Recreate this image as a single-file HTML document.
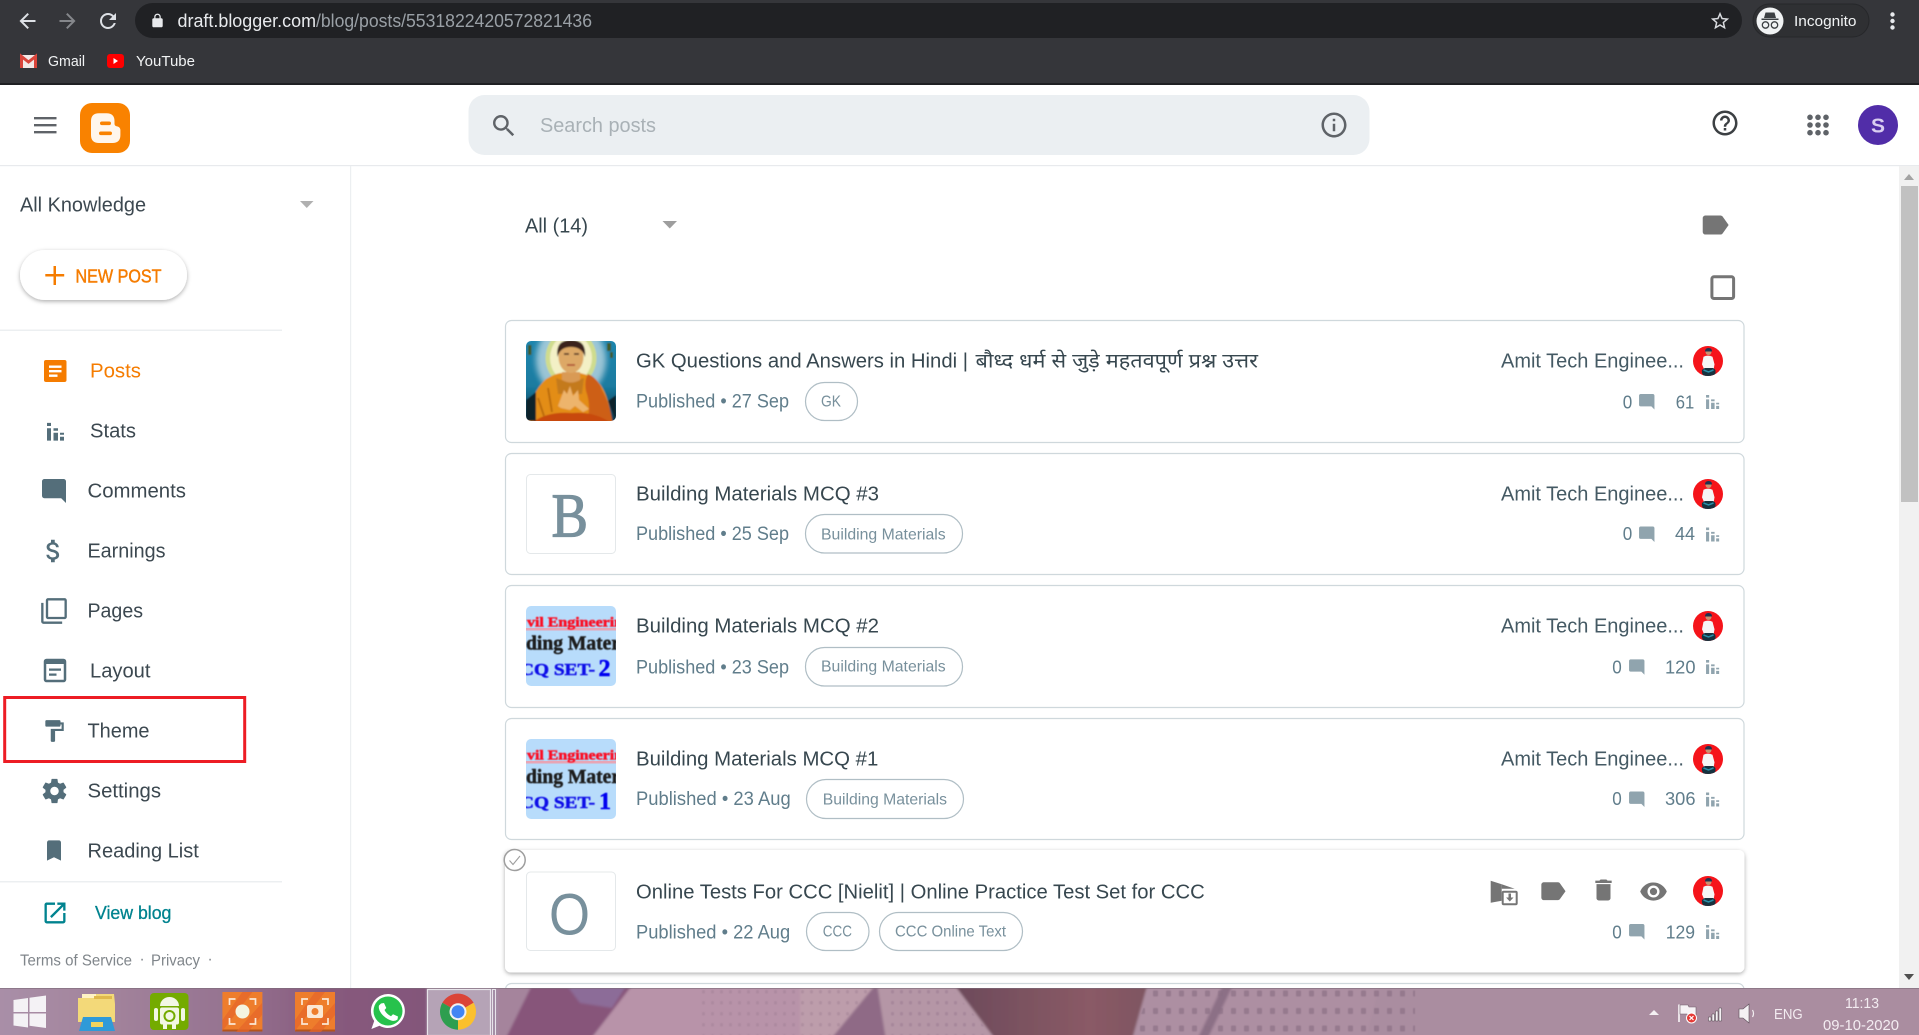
<!DOCTYPE html>
<html lang="en"><head><meta charset="utf-8"><title>Blogger - Posts</title>
<style>
html,body{margin:0;padding:0;width:1919px;height:1035px;overflow:hidden;background:#fff}
svg{display:block}
text{font-family:"Liberation Sans","Noto Sans Devanagari","Lohit Devanagari","FreeSans","Noto Sans CJK SC",sans-serif}
.t{font-size:20px;fill:#37474f}
.s{font-size:19.5px;fill:#607d8b}
.p{font-size:16px;fill:#78909c}
.n{font-size:20px;fill:#3c4850}
.a{font-size:20px;fill:#455a64}
.c{font-size:18.5px;fill:#607d8b}
.f{font-size:15.5px;fill:#80868b}
.w{font-size:15px;fill:#f1f3f4}
text.sf{font-family:"Liberation Serif",serif;font-weight:bold;stroke-width:.5px}
</style></head><body>
<svg width="1919" height="1035" viewBox="0 0 1919 1035" xmlns="http://www.w3.org/2000/svg">
<defs>
<filter id="sh" x="-5%" y="-20%" width="110%" height="140%"><feDropShadow dx="0" dy="1.5" stdDeviation="2" flood-color="#000" flood-opacity=".32"/></filter>
<filter id="bl1" x="-2%" y="-10%" width="104%" height="120%"><feGaussianBlur stdDeviation="1.200"/></filter>
<filter id="bl2" x="-5%" y="-5%" width="110%" height="110%"><feGaussianBlur stdDeviation=".55"/></filter>
<filter id="bl3" x="-5%" y="-5%" width="110%" height="110%"><feGaussianBlur stdDeviation=".8"/></filter>
<filter id="bl4" x="-30%" y="-30%" width="160%" height="160%"><feGaussianBlur stdDeviation="3"/></filter>
<pattern id="lace" patternUnits="userSpaceOnUse" x="1150" y="988" width="13" height="17.500"><rect x="3" y="2.500" width="5" height="6" rx="1" fill="#8a6f84" opacity=".65"/></pattern>
<pattern id="lace2" patternUnits="userSpaceOnUse" x="700" y="988" width="9" height="11"><rect x="2" y="2" width="3" height="3.500" rx="1" fill="#97788f" opacity=".5"/></pattern>
<linearGradient id="dk" x1="0" x2="1" y1="0" y2="0"><stop offset="0" stop-color="#6c4a5a"/><stop offset=".7" stop-color="#8a5a66"/><stop offset="1" stop-color="#7e5561"/></linearGradient>
<linearGradient id="lf" x1="0" x2="1" y1="0" y2="0"><stop offset="0" stop-color="#a98fa8"/><stop offset=".25" stop-color="#a3849c"/><stop offset=".55" stop-color="#957290"/><stop offset=".78" stop-color="#875a7d"/><stop offset="1" stop-color="#83567a"/></linearGradient>
<linearGradient id="bud" x1="0" x2="0" y1="0" y2="1"><stop offset="0" stop-color="#1f86ae"/><stop offset=".55" stop-color="#1a7ba0"/><stop offset="1" stop-color="#0d3244"/></linearGradient>
<clipPath id="c1"><rect x="526" y="341" width="90" height="80" rx="5"/></clipPath>
<clipPath id="c3"><rect x="526" y="606" width="90" height="80" rx="5"/></clipPath>
<clipPath id="c4"><rect x="526" y="739" width="90" height="80" rx="5"/></clipPath>
<clipPath id="av"><circle cx="15" cy="15" r="15"/></clipPath>
<symbol id="search" viewBox="0 0 24 24"><path d="M15.5 14h-.79l-.28-.27A6.471 6.471 0 0 0 16 9.5 6.5 6.5 0 1 0 9.5 16c1.61 0 3.09-.59 4.23-1.57l.27.28v.79l5 4.99L20.49 19l-4.99-5zm-6 0C7.01 14 5 11.99 5 9.5S7.01 5 9.5 5 14 7.01 14 9.5 11.99 14 9.5 14z"/></symbol>
<symbol id="info" viewBox="0 0 24 24"><path d="M11 7h2v2h-2zm0 4h2v6h-2zm1-9C6.48 2 2 6.48 2 12s4.48 10 10 10 10-4.48 10-10S17.52 2 12 2zm0 18c-4.41 0-8-3.59-8-8s3.59-8 8-8 8 3.59 8 8-3.59 8-8 8z"/></symbol>
<symbol id="help" viewBox="0 0 24 24"><path d="M11 18h2v-2h-2v2zm1-16C6.48 2 2 6.48 2 12s4.48 10 10 10 10-4.48 10-10S17.52 2 12 2zm0 18c-4.41 0-8-3.59-8-8s3.59-8 8-8 8 3.59 8 8-3.59 8-8 8zm0-14c-2.21 0-4 1.79-4 4h2c0-1.1.9-2 2-2s2 .9 2 2c0 2-3 1.75-3 5h2c0-2.25 3-2.5 3-5 0-2.21-1.79-4-4-4z"/></symbol>
<symbol id="label" viewBox="0 0 24 24"><path d="M17.63 5.84C17.27 5.33 16.67 5 16 5L5 5.01C3.9 5.01 3 5.9 3 7v10c0 1.1.9 1.99 2 1.99L16 19c.67 0 1.27-.33 1.63-.84L22 12l-4.37-6.16z"/></symbol>
<symbol id="del" viewBox="0 0 24 24"><path d="M6 19c0 1.1.9 2 2 2h8c1.1 0 2-.9 2-2V7H6v12zM19 4h-3.5l-1-1h-5l-1 1H5v2h14V4z"/></symbol>
<symbol id="eye" viewBox="0 0 24 24"><path d="M12 4.5C7 4.5 2.73 7.61 1 12c1.73 4.39 6 7.5 11 7.5s9.27-3.11 11-7.5c-1.73-4.39-6-7.5-11-7.5zM12 17c-2.76 0-5-2.24-5-5s2.24-5 5-5 5 2.24 5 5-2.24 5-5 5zm0-8c-1.66 0-3 1.34-3 3s1.34 3 3 3 3-1.34 3-3-1.34-3-3-3z"/></symbol>
<symbol id="cm" viewBox="0 0 24 24"><path d="M21.99 4c0-1.1-.89-2-1.99-2H4c-1.1 0-2 .9-2 2v12c0 1.1.9 2 2 2h14l4 4-.01-18z"/></symbol>
<symbol id="bars" viewBox="0 0 17 18"><path d="M0 0h4v3.3H0zM0 5.6h4V18H0zM6.5 5.6H11v2.5H6.5zM6.5 10H11v8H6.5zM13 10h4v2h-4zM13 14h4v4h-4z"/></symbol>
<symbol id="avatar" viewBox="0 0 30 30"><g clip-path="url(#av)"><rect width="30" height="30" fill="#f5141a"/><path d="M12.500 5.500q0 3.500 3 3.500t3-3.500z" fill="#c9916f"/><path d="M12 5.500q0-3.500 3.500-3.500t3.500 3.500z" fill="#1e3350"/><path d="M10.500 10.800q4.500-2.300 9 0l2 7.500-1 6h-9l-2.500-6z" fill="#f5f5f5"/><path d="M9 27q-1-4 3-5l8 0q3 1 2.500 5l-1 3h-11z" fill="#16323f"/><path d="M10.500 24l5 2 5-2" stroke="#2a8fa8" stroke-width="1.500" fill="none"/></g></symbol>
</defs>

<!-- Browser chrome -->
<rect width="1919" height="85" fill="#35363a"/>
<rect y="83" width="1919" height="2" fill="#1f2023"/>
<rect x="135" y="3" width="1607" height="35" rx="17.5" fill="#202124"/>
<svg x="15.5" y="9" width="24" height="24" viewBox="0 0 24 24"><path fill="#dee1e6" d="M20 11H7.83l5.59-5.59L12 4l-8 8 8 8 1.41-1.41L7.83 13H20v-2z"/></svg>
<svg x="55.5" y="9" width="24" height="24" viewBox="0 0 24 24"><path fill="#85878b" d="M12 4l-1.41 1.41L16.17 11H4v2h12.17l-5.58 5.59L12 20l8-8z"/></svg>
<svg x="96" y="9" width="24" height="24" viewBox="0 0 24 24"><path fill="#dee1e6" d="M17.65 6.35C16.2 4.9 14.21 4 12 4c-4.42 0-7.99 3.58-7.99 8s3.57 8 7.99 8c3.73 0 6.84-2.55 7.73-6h-2.08c-.82 2.33-3.04 4-5.65 4-3.31 0-6-2.69-6-6s2.69-6 6-6c1.66 0 3.14.69 4.22 1.78L13 11h7V4l-2.35 2.35z"/></svg>
<svg x="149.7" y="13" width="15.6" height="15.6" viewBox="0 0 24 24"><path fill="#e8eaed" d="M18 8h-1V6c0-2.76-2.24-5-5-5S7 3.24 7 6v2H6c-1.1 0-2 .9-2 2v10c0 1.1.9 2 2 2h12c1.1 0 2-.9 2-2V10c0-1.1-.9-2-2-2zm-2.900 0H8.900V6c0-1.710 1.390-3.100 3.100-3.100 1.710 0 3.100 1.390 3.100 3.100v2z"/></svg>
<text x="177.5" y="27" font-size="18" fill="#e8eaed" textLength="138.5" lengthAdjust="spacingAndGlyphs">draft.blogger.com</text>
<text x="316" y="27" font-size="18" fill="#9aa0a6" textLength="276" lengthAdjust="spacingAndGlyphs">/blog/posts/5531822420572821436</text>
<svg x="1709" y="10" width="22" height="22" viewBox="0 0 24 24"><path fill="#dadce0" d="M22 9.24l-7.19-.62L12 2 9.19 8.63 2 9.24l5.46 4.73L5.82 21 12 17.27 18.18 21l-1.63-7.03L22 9.24zM12 15.4l-3.76 2.27 1-4.28-3.32-2.88 4.38-.38L12 6.1l1.71 4.04 4.38.38-3.32 2.88 1 4.28L12 15.4z"/></svg>
<rect x="1753" y="4" width="116" height="33" rx="16.5" fill="#2f3033" stroke="#26272a"/>
<circle cx="1770" cy="21" r="13.5" fill="#f1f3f4"/>
<path d="M1764 18h12l-1.5-5.5h-9zM1761.5 18.5h17v1.5h-17z" fill="#3c4043"/>
<circle cx="1765.5" cy="25" r="3.2" fill="none" stroke="#3c4043" stroke-width="1.3"/><circle cx="1774.5" cy="25" r="3.2" fill="none" stroke="#3c4043" stroke-width="1.3"/>
<text x="1794" y="26" class="w" textLength="62.5" lengthAdjust="spacingAndGlyphs">Incognito</text>
<circle cx="1892.5" cy="14.5" r="2.2" fill="#e8eaed"/><circle cx="1892.5" cy="21" r="2.2" fill="#e8eaed"/><circle cx="1892.5" cy="27.5" r="2.2" fill="#e8eaed"/>
<!-- bookmarks -->
<rect x="20" y="55" width="17" height="13" rx="1" fill="#f3e9e7"/>
<path d="M21.500 68V56.500L28.500 62l7-5.500V68" fill="none" stroke="#d9453b" stroke-width="3"/>
<text x="48" y="66" class="w" textLength="37" lengthAdjust="spacingAndGlyphs">Gmail</text>
<rect x="107" y="54" width="17" height="14" rx="3" fill="#f00"/><path d="M113.500 58v6l4.500-3z" fill="#fff"/>
<text x="136" y="66" class="w" textLength="59" lengthAdjust="spacingAndGlyphs">YouTube</text>

<!-- App header -->
<rect y="85" width="1919" height="80" fill="#fff"/>
<rect y="165" width="1919" height="1.200" fill="#e8eaed"/>
<path d="M34 117h22.500v2.400H34zM34 124h22.500v2.400H34zM34 131h22.500v2.400H34z" fill="#5f6368"/>
<rect x="80" y="103" width="50" height="50" rx="12" fill="#f98200"/>
<path d="M99 113.300h7.500q8 0 8 8v2.500q0 2 2 2.500q3.900.5 3.900 4v4.700q0 8-8 8h-13.400q-8 0-8-8v-13.700q0-8 8-8z" fill="#fff6ec"/>
<rect x="100" y="121.500" width="11" height="3.600" rx="1.800" fill="#f98200"/>
<rect x="99" y="131.500" width="13" height="3.600" rx="1.800" fill="#f98200"/>
<rect x="468.500" y="95" width="901" height="60" rx="16" fill="#ebeff2"/>
<use href="#search" x="489.400" y="111.400" width="29" height="29" fill="#5f6368"/>
<text x="540" y="132" font-size="20" fill="#a9b1b6" textLength="116" lengthAdjust="spacingAndGlyphs">Search posts</text>
<use href="#info" x="1319" y="110" width="30" height="30" fill="#5f6368"/>
<use href="#help" x="1710" y="108" width="30" height="30" fill="#3c4043"/>
<g fill="#5f6368"><circle cx="1810" cy="117.300" r="2.800"/><circle cx="1818" cy="117.300" r="2.800"/><circle cx="1826" cy="117.300" r="2.800"/><circle cx="1810" cy="125" r="2.800"/><circle cx="1818" cy="125" r="2.800"/><circle cx="1826" cy="125" r="2.800"/><circle cx="1810" cy="132.700" r="2.800"/><circle cx="1818" cy="132.700" r="2.800"/><circle cx="1826" cy="132.700" r="2.800"/></g>
<circle cx="1878" cy="125" r="20" fill="#512da8"/>
<text x="1871" y="132.500" font-size="20" font-weight="bold" fill="#d9cdf0" textLength="14" lengthAdjust="spacingAndGlyphs">S</text>

<!-- Sidebar -->
<rect x="350" y="166" width="1.200" height="824" fill="#eceff1"/>
<text x="20" y="211.700" class="n" textLength="126" lengthAdjust="spacingAndGlyphs">All Knowledge</text>
<path d="M300 201h13.500l-6.750 7z" fill="#b0b0b0"/>
<rect x="20" y="250" width="167" height="50" rx="25" fill="#fff" filter="url(#sh)"/>
<path d="M53.500 266h2.500v8h8.200v2.500H56v8.500h-2.500v-8.500h-8.200V274h8.200z" fill="#f57c00"/>
<text x="75.500" y="282.300" font-size="18" fill="#f57c00" stroke="#f57c00" stroke-width=".45" textLength="86" lengthAdjust="spacingAndGlyphs">NEW POST</text>
<rect y="329.500" width="282" height="1.500" fill="#eceff1"/>

<rect x="44" y="360" width="22.500" height="22" rx="2" fill="#f57c00"/>
<path d="M49 365.500h12.500v2.400H49zM49 370h12.500v2.400H49zM49 374.500h8.500v2.400H49z" fill="#fff"/>
<text x="90" y="377.700" font-size="20" fill="#f57c00" textLength="51" lengthAdjust="spacingAndGlyphs">Posts</text>

<use href="#bars" x="47" y="422.700" width="17" height="18" fill="#546e7a"/>
<text x="90" y="437.700" class="n" textLength="46" lengthAdjust="spacingAndGlyphs">Stats</text>

<use href="#cm" x="39.600" y="476.600" width="28.800" height="28.800" fill="#546e7a"/>
<text x="87.500" y="497.700" class="n" textLength="98.500" lengthAdjust="spacingAndGlyphs">Comments</text>

<svg x="38.500" y="536" width="30" height="30" viewBox="0 0 24 24"><path fill="#546e7a" d="M11.800 10.900c-2.270-.59-3-1.200-3-2.150 0-1.090 1.010-1.850 2.700-1.850 1.780 0 2.440.85 2.500 2.100h2.210c-.07-1.720-1.120-3.300-3.210-3.810V3h-3v2.160c-1.940.42-3.500 1.680-3.500 3.610 0 2.310 1.910 3.460 4.700 4.130 2.500.6 3 1.480 3 2.410 0 .69-.49 1.790-2.700 1.790-2.060 0-2.870-.92-2.980-2.100h-2.200c.12 2.190 1.760 3.420 3.680 3.830V21h3v-2.150c1.950-.37 3.500-1.500 3.500-3.550 0-2.840-2.430-3.810-4.700-4.400z"/></svg>
<text x="87.500" y="557.700" class="n" textLength="78" lengthAdjust="spacingAndGlyphs">Earnings</text>

<svg x="40" y="597" width="28" height="28" viewBox="0 0 24 24"><path fill="#546e7a" d="M3 5H1v16c0 1.100.9 2 2 2h16v-2H3V5zm18-4H7c-1.100 0-2 .9-2 2v14c0 1.100.9 2 2 2h14c1.100 0 2-.9 2-2V3c0-1.100-.9-2-2-2zm0 16H7V3h14v14z"/></svg>
<text x="87.500" y="617.700" class="n" textLength="55.500" lengthAdjust="spacingAndGlyphs">Pages</text>

<rect x="45" y="660" width="20" height="21" rx="1.500" fill="none" stroke="#546e7a" stroke-width="2.500"/>
<path d="M45 660h20v4H45zM49 668.500h12v2.200H49zM49 673.500h7.500v2.200H49z" fill="#546e7a"/>
<text x="90" y="677.700" class="n" textLength="60.500" lengthAdjust="spacingAndGlyphs">Layout</text>

<rect x="4.700" y="697.500" width="240" height="64" fill="none" stroke="#ed1c24" stroke-width="3"/>
<svg x="41" y="718" width="26" height="26" viewBox="0 0 24 24"><path fill="#546e7a" d="M18 4V3c0-.55-.45-1-1-1H5c-.55 0-1 .45-1 1v4c0 .55.45 1 1 1h12c.55 0 1-.45 1-1V6h1v4H9v11c0 .55.45 1 1 1h2c.55 0 1-.45 1-1v-9h8V4h-3z"/></svg>
<text x="87.500" y="737.700" class="n" textLength="62" lengthAdjust="spacingAndGlyphs">Theme</text>

<svg x="40" y="776.500" width="29" height="29" viewBox="0 0 24 24"><path fill="#546e7a" d="M19.430 12.980c.04-.32.07-.64.07-.98s-.03-.66-.07-.98l2.110-1.650c.19-.15.24-.42.12-.64l-2-3.460c-.12-.22-.39-.3-.61-.22l-2.490 1c-.52-.4-1.080-.73-1.690-.98l-.38-2.650C14.460 2.180 14.250 2 14 2h-4c-.25 0-.46.18-.49.42l-.38 2.650c-.61.25-1.170.59-1.690.98l-2.490-1c-.23-.09-.49 0-.61.22l-2 3.460c-.13.22-.07.49.12.64l2.110 1.650c-.04.32-.07.65-.07.98s.03.66.07.98l-2.110 1.650c-.19.15-.24.42-.12.64l2 3.460c.12.22.39.3.61.22l2.490-1c.52.4 1.080.73 1.690.98l.38 2.650c.03.24.24.42.49.42h4c.25 0 .46-.18.49-.42l.38-2.650c.61-.25 1.170-.59 1.690-.98l2.490 1c.23.09.49 0 .61-.22l2-3.460c.12-.22.07-.49-.12-.64l-2.110-1.650zM12 15.500c-1.930 0-3.500-1.570-3.500-3.500s1.570-3.500 3.500-3.500 3.500 1.570 3.500 3.500-1.570 3.500-3.500 3.500z"/></svg>
<text x="87.500" y="797.700" class="n" textLength="73.500" lengthAdjust="spacingAndGlyphs">Settings</text>

<svg x="42" y="837" width="24" height="27" viewBox="0 0 24 24" preserveAspectRatio="none"><path fill="#546e7a" d="M17 3H7c-1.100 0-1.990.9-1.990 2L5 21l7-3 7 3V5c0-1.100-.9-2-2-2z"/></svg>
<text x="87.500" y="857.700" class="n" textLength="111.300" lengthAdjust="spacingAndGlyphs">Reading List</text>
<rect y="881" width="282" height="1.500" fill="#eceff1"/>

<svg x="41" y="899" width="28" height="28" viewBox="0 0 24 24"><path fill="#00838f" d="M19 19H5V5h7V3H5c-1.110 0-2 .9-2 2v14c0 1.100.89 2 2 2h14c1.100 0 2-.9 2-2v-7h-2v7zM14 3v2h3.590l-9.830 9.830 1.410 1.410L19 6.410V10h2V3h-7z"/></svg>
<text x="95" y="919" font-size="18" fill="#00838f" stroke="#00838f" stroke-width=".3" textLength="76.400" lengthAdjust="spacingAndGlyphs">View blog</text>
<text x="20" y="965.700" class="f" textLength="112" lengthAdjust="spacingAndGlyphs">Terms of Service</text>
<text x="139.500" y="964" class="f">·</text>
<text x="151" y="965.700" class="f" textLength="49" lengthAdjust="spacingAndGlyphs">Privacy</text>
<text x="207.500" y="964" class="f">·</text>
<text x="20.400" y="1002" class="f" textLength="105" lengthAdjust="spacingAndGlyphs">Content Policy</text>

<!-- Toolbar row -->
<text x="525" y="232.300" font-size="20" fill="#37474f" textLength="63" lengthAdjust="spacingAndGlyphs">All (14)</text>
<path d="M662.500 221h14.500l-7.250 7.500z" fill="#9e9e9e"/>
<svg x="1700" y="210" width="30" height="30" viewBox="1 1 22 22" preserveAspectRatio="none"><use href="#label" width="24" height="24" fill="#757575"/></svg>
<rect x="1711.900" y="276.800" width="21.700" height="21.700" rx="2" fill="none" stroke="#757575" stroke-width="3"/>

<!-- Cards -->
<g fill="#fff" stroke="#cfd8dc" stroke-width="1.200">
<rect x="505.500" y="320.500" width="1238.500" height="122" rx="6"/>
<rect x="505.500" y="453.500" width="1238.500" height="121" rx="6"/>
<rect x="505.500" y="585.500" width="1238.500" height="122" rx="6"/>
<rect x="505.500" y="718.500" width="1238.500" height="121" rx="6"/>
<rect x="505.500" y="983.500" width="1238.500" height="60" rx="6"/>
</g>
<rect x="505" y="850" width="1239.500" height="122.500" rx="6" fill="#fff" filter="url(#sh)"/>

<!-- Thumb 1 : Buddha -->
<g clip-path="url(#c1)"><g filter="url(#bl3)">
<rect x="522" y="337" width="98" height="88" fill="url(#bud)"/>
<ellipse cx="571" cy="360" rx="35" ry="38" fill="#dfeaf0" opacity=".65" filter="url(#bl4)"/>
<ellipse cx="571" cy="358" rx="25.500" ry="28" fill="#cfdc8e"/>
<ellipse cx="571" cy="358" rx="21" ry="24" fill="#f3f0c6"/>
<path d="M526 425q4-32 20-46q10-6 16-6h18q10 2 18 9q10 10 14 40v3z" fill="#e38d17"/>
<path d="M588 374q10 4 14 16q8 14 11 35h-27q6-18 0-34q-2-10 2-17z" fill="#cd5e15"/>
<path d="M556 378q14 6 28 0l-2 16h-24z" fill="#c47a1f"/>
<path d="M530 425q14-14 42-12q24-2 42 12z" fill="#c84a10"/>
<path d="M538 398l6 18M548 388l4 24" stroke="#b96a10" stroke-width="2" fill="none"/>
<path d="M562 372h18v8q-9 5-18 0z" fill="#d99a55"/>
<ellipse cx="571" cy="357" rx="12.500" ry="16" fill="#dda866"/>
<path d="M557.500 357q-2.500-17 13.500-17q16 0 14 17q-3-10-14-10q-11 0-13.500 10z" fill="#3a211d"/>
<path d="M564 354h5M574 354h5" stroke="#3a211d" stroke-width="1.500"/><path d="M567 365h8" stroke="#a8402a" stroke-width="1.500"/>
<path d="M558 406l6-16 3 4 3-8 3 10 5-6 1 10 10 9-6 3-8-6-5 4-9-2z" fill="#edb46c"/>
<path d="M528 345h3.500v10h-3.500zM607 343h4v8h-4zM610 352h3v6h-3z" fill="#3f5a20"/>
<path d="M526 400l10-8v29h-10zM616 395l-8 6 8 20z" fill="#08202c"/>
</g></g>
<!-- Thumb 2 : B -->
<rect x="526.500" y="474.500" width="89" height="79" rx="4" fill="#fff" stroke="#e4e8ea" stroke-width="1"/>
<text x="551.500" y="536.700" font-size="62" fill="#78909c" stroke="#78909c" stroke-width="1.200" style="font-family:'Liberation Serif',serif" textLength="36.500" lengthAdjust="spacingAndGlyphs">B</text>
<!-- Thumb 3 -->
<g clip-path="url(#c3)">
<rect x="526" y="606" width="90" height="80" fill="#b8dcfb"/>
<rect x="526" y="628" width="90" height="2.500" fill="#e8a5b5"/>
<g filter="url(#bl2)">
<text x="527" y="626.700" class="sf" font-size="13.500" fill="#fb1025" stroke="#fb1025" textLength="96" lengthAdjust="spacingAndGlyphs">vil Engineerin</text>
<text x="526" y="649.300" class="sf" font-size="20" fill="#1c1c1c" stroke="#1c1c1c" textLength="94" lengthAdjust="spacingAndGlyphs">ding Mater</text>
<text x="520" y="675" class="sf" font-size="17" fill="#0f0fe8" stroke="#0f0fe8" textLength="75" lengthAdjust="spacingAndGlyphs">CQ SET-</text>
<text x="598.500" y="676" class="sf" font-size="24" fill="#0000f0" stroke="#0000f0">2</text>
</g></g>
<!-- Thumb 4 -->
<g clip-path="url(#c4)">
<rect x="526" y="739" width="90" height="80" fill="#b8dcfb"/>
<rect x="526" y="761" width="90" height="2.500" fill="#e8a5b5"/>
<g filter="url(#bl2)">
<text x="527" y="759.700" class="sf" font-size="13.500" fill="#fb1025" stroke="#fb1025" textLength="96" lengthAdjust="spacingAndGlyphs">vil Engineerin</text>
<text x="526" y="783" class="sf" font-size="20" fill="#1c1c1c" stroke="#1c1c1c" textLength="94" lengthAdjust="spacingAndGlyphs">ding Mater</text>
<text x="520" y="808" class="sf" font-size="17" fill="#0f0fe8" stroke="#0f0fe8" textLength="75" lengthAdjust="spacingAndGlyphs">CQ SET-</text>
<text x="599" y="809" class="sf" font-size="24" fill="#0000f0" stroke="#0000f0">1</text>
</g></g>
<!-- Thumb 5 : O -->
<rect x="526.500" y="872" width="89" height="78.500" rx="4" fill="#fff" stroke="#e4e8ea" stroke-width="1"/>
<text x="549" y="934.500" font-size="58" fill="#78909c" textLength="41" lengthAdjust="spacingAndGlyphs">O</text>
<circle cx="514.700" cy="860" r="10.500" fill="#fff" stroke="#9e9e9e" stroke-width="1.500"/>
<path d="M509.500 860.500l3.500 4 7-8.500" fill="none" stroke="#9e9e9e" stroke-width="1.100"/>

<!-- Card 1 text -->
<text x="636" y="367.700" class="t" textLength="332" lengthAdjust="spacingAndGlyphs">GK Questions and Answers in Hindi |</text>
<text x="975.500" y="367.700" class="t" textLength="282.500" lengthAdjust="spacingAndGlyphs">बौध्द धर्म से जुड़े महतवपूर्ण प्रश्न उत्तर</text>
<text x="636" y="407.700" class="s" textLength="153" lengthAdjust="spacingAndGlyphs">Published • 27 Sep</text>
<rect x="805.500" y="382.500" width="52" height="38" rx="19" fill="#fff" stroke="#b0bec5" stroke-width="1.200"/>
<text x="821" y="406.700" class="p" textLength="20" lengthAdjust="spacingAndGlyphs">GK</text>
<text x="1501" y="367.700" class="a" textLength="183" lengthAdjust="spacingAndGlyphs">Amit Tech Enginee...</text>
<use href="#avatar" x="1693" y="346" width="30" height="30"/>
<text x="1622.700" y="408.300" class="c" textLength="9.500" lengthAdjust="spacingAndGlyphs">0</text>
<use href="#cm" x="1637.500" y="392.500" width="18.500" height="18.500" fill="#90a4ae"/>
<text x="1675.700" y="408.300" class="c" textLength="18.500" lengthAdjust="spacingAndGlyphs">61</text>
<use href="#bars" x="1706" y="395" width="13.300" height="14" fill="#90a4ae"/>

<!-- Card 2 text -->
<text x="636" y="500.700" class="t" textLength="243" lengthAdjust="spacingAndGlyphs">Building Materials MCQ #3</text>
<text x="636" y="540" class="s" textLength="153" lengthAdjust="spacingAndGlyphs">Published • 25 Sep</text>
<rect x="805.500" y="514.500" width="157" height="38.500" rx="19" fill="#fff" stroke="#b0bec5" stroke-width="1.200"/>
<text x="821" y="539.300" class="p" textLength="124.700" lengthAdjust="spacingAndGlyphs">Building Materials</text>
<text x="1501" y="500.700" class="a" textLength="183" lengthAdjust="spacingAndGlyphs">Amit Tech Enginee...</text>
<use href="#avatar" x="1693" y="479" width="30" height="30"/>
<text x="1622.700" y="540" class="c" textLength="9.500" lengthAdjust="spacingAndGlyphs">0</text>
<use href="#cm" x="1637.500" y="525" width="18.500" height="18.500" fill="#90a4ae"/>
<text x="1675" y="540" class="c" textLength="20" lengthAdjust="spacingAndGlyphs">44</text>
<use href="#bars" x="1706" y="527.500" width="13.300" height="14" fill="#90a4ae"/>

<!-- Card 3 text -->
<text x="636" y="632.700" class="t" textLength="243" lengthAdjust="spacingAndGlyphs">Building Materials MCQ #2</text>
<text x="636" y="673.300" class="s" textLength="153" lengthAdjust="spacingAndGlyphs">Published • 23 Sep</text>
<rect x="805.500" y="647.500" width="157" height="38.500" rx="19" fill="#fff" stroke="#b0bec5" stroke-width="1.200"/>
<text x="821" y="671.700" class="p" textLength="124.700" lengthAdjust="spacingAndGlyphs">Building Materials</text>
<text x="1501" y="632.700" class="a" textLength="183" lengthAdjust="spacingAndGlyphs">Amit Tech Enginee...</text>
<use href="#avatar" x="1693" y="611" width="30" height="30"/>
<text x="1612.300" y="673.300" class="c" textLength="9.500" lengthAdjust="spacingAndGlyphs">0</text>
<use href="#cm" x="1627.500" y="657.800" width="18.500" height="18.500" fill="#90a4ae"/>
<text x="1665" y="673.300" class="c" textLength="30.500" lengthAdjust="spacingAndGlyphs">120</text>
<use href="#bars" x="1706" y="660" width="13.300" height="14" fill="#90a4ae"/>

<!-- Card 4 text -->
<text x="636" y="765.700" class="t" textLength="242.300" lengthAdjust="spacingAndGlyphs">Building Materials MCQ #1</text>
<text x="636" y="805" class="s" textLength="154.700" lengthAdjust="spacingAndGlyphs">Published • 23 Aug</text>
<rect x="806.500" y="779.500" width="157" height="39" rx="19.500" fill="#fff" stroke="#b0bec5" stroke-width="1.200"/>
<text x="822.700" y="804.300" class="p" textLength="124.300" lengthAdjust="spacingAndGlyphs">Building Materials</text>
<text x="1501" y="765.700" class="a" textLength="183" lengthAdjust="spacingAndGlyphs">Amit Tech Enginee...</text>
<use href="#avatar" x="1693" y="744" width="30" height="30"/>
<text x="1612.300" y="805" class="c" textLength="9.500" lengthAdjust="spacingAndGlyphs">0</text>
<use href="#cm" x="1627.500" y="790" width="18.500" height="18.500" fill="#90a4ae"/>
<text x="1665" y="805" class="c" textLength="30.500" lengthAdjust="spacingAndGlyphs">306</text>
<use href="#bars" x="1706" y="792.500" width="13.300" height="14" fill="#90a4ae"/>

<!-- Card 5 text -->
<text x="636" y="898.300" class="t" textLength="568.700" lengthAdjust="spacingAndGlyphs">Online Tests For CCC [Nielit] | Online Practice Test Set for CCC</text>
<text x="636" y="938.300" class="s" textLength="154.200" lengthAdjust="spacingAndGlyphs">Published • 22 Aug</text>
<rect x="806.500" y="912.500" width="62.500" height="38" rx="19" fill="#fff" stroke="#b0bec5" stroke-width="1.200"/>
<text x="822.800" y="936.700" class="p" textLength="29.200" lengthAdjust="spacingAndGlyphs">CCC</text>
<rect x="879.500" y="912.500" width="143" height="38" rx="19" fill="#fff" stroke="#b0bec5" stroke-width="1.200"/>
<text x="895" y="936.700" class="p" textLength="111" lengthAdjust="spacingAndGlyphs">CCC Online Text</text>
<g fill="#757575">
<path d="M1490.700 880.700l11 3.500v4.500h13l-13 0v12l-11 2z"/>
<path d="M1501.700 884.200l13 4.500h-13z"/>
<rect x="1502.700" y="891.700" width="14" height="12.500" rx="1" fill="#fff" stroke="#757575" stroke-width="2"/>
<path d="M1508.500 893.500h2.500v4h2.500l-3.700 4-3.700-4h2.400z"/>
</g>
<svg x="1538.800" y="877.200" width="28" height="28" viewBox="1 1 22 22"><use href="#label" width="24" height="24" fill="#757575"/></svg>
<svg x="1589.500" y="876" width="28" height="28" viewBox="0 0 24 24"><use href="#del" width="24" height="24" fill="#757575"/></svg>
<use href="#eye" x="1639" y="877" width="29" height="29" fill="#757575"/>
<use href="#avatar" x="1693" y="876" width="30" height="30"/>
<text x="1612.300" y="938.300" class="c" textLength="9.500" lengthAdjust="spacingAndGlyphs">0</text>
<use href="#cm" x="1627.500" y="922.500" width="18.500" height="18.500" fill="#90a4ae"/>
<text x="1665.700" y="938.300" class="c" textLength="29.300" lengthAdjust="spacingAndGlyphs">129</text>
<use href="#bars" x="1706" y="925" width="13.300" height="14" fill="#90a4ae"/>

<!-- Scrollbar -->
<rect x="1899" y="166" width="20" height="822" fill="#f1f1f1"/>
<path d="M1904 180h10l-5-6z" fill="#a3a3a3"/>
<rect x="1901" y="186" width="17" height="316" fill="#c1c1c1"/>
<path d="M1904 974h10l-5 6z" fill="#505050"/>

<!-- Taskbar -->
<svg x="0" y="988" width="1919" height="47" viewBox="0 988 1919 47">
<rect y="988" width="1919" height="47" fill="#ab8ea1"/>
<g filter="url(#bl1)">
<rect x="-5" y="983" width="432" height="57" fill="url(#lf)"/>
<rect x="427" y="983" width="70" height="57" fill="#a58fa7"/>
<rect x="497" y="983" width="40" height="57" fill="#a5849c"/>
<path d="M505 1040L533 983H634L590 1040Z" fill="#87557a"/>
<path d="M565 983H628L612 1008L580 1003Z" fill="#8c6c98"/>
<path d="M634 983H800V1040H590Z" fill="#b893a9"/>
<path d="M800 983H881L835 1040H800Z" fill="#bd9dab"/>
<path d="M877 983L886 1040H830Z" fill="#8f6a86"/>
<path d="M877 983H953L996 1040H886Z" fill="#b596a6"/>
<path d="M953 983H1148L1132 1040H996Z" fill="url(#dk)"/>
<path d="M1148 983H1420V1040H1132Z" fill="#ad8fa2"/>
<path d="M1224 983H1234L1207 1040H1197Z" fill="#8c7086"/>
<path d="M1380 983H1919V1040H1365Z" fill="#aa8da0"/>
</g>
<g filter="url(#bl2)">
<path d="M1150 988H1415V1035H1134Z" fill="url(#lace)"/>
<path d="M700 988H875L835 1035H700Z" fill="url(#lace2)" opacity=".7"/>
<path d="M885 988H950L992 1035H888Z" fill="url(#lace2)"/>
</g>
<rect y="988" width="1919" height="1" fill="#7c6a78" opacity=".6"/>
</svg>
<!-- Windows -->
<path d="M13.500 1000l14.500-2v14h-14.500zM29.500 997.800L46 995.500v16.500H29.500zM13.500 1013.500H28v14l-14.500-2zM29.500 1013.500H46V1028l-16.500-2.300z" fill="#f4f2f5"/>
<!-- Explorer -->
<path d="M78 998h13l3-4h20l1 10v18H78z" fill="#f3d979"/>
<path d="M82 994h14v4H82z" fill="#fff3c4"/><path d="M94 996h18v3H94z" fill="#e0b94c"/>
<path d="M83 1017h28l4 14H79z" fill="#2f9ad8"/><path d="M91 1022h12v5H91z" fill="#f2d35e"/>
<!-- Android -->
<rect x="150" y="993" width="38.500" height="37" rx="4" fill="#74ab00"/>
<path d="M160 1006a9.500 9 0 0 1 19 0z" fill="#f2f7e4"/><rect x="160" y="1007.500" width="19" height="17" rx="2" fill="#f2f7e4"/>
<rect x="154" y="1008" width="4" height="13" rx="2" fill="#f2f7e4"/><rect x="181" y="1008" width="4" height="13" rx="2" fill="#f2f7e4"/>
<rect x="163" y="1024" width="4" height="5" fill="#f2f7e4"/><rect x="172" y="1024" width="4" height="5" fill="#f2f7e4"/>
<circle cx="169.500" cy="1016" r="5" fill="none" stroke="#74ab00" stroke-width="2"/>
<!-- Orange 1 -->
<rect x="222.400" y="992" width="40" height="39.500" fill="#ee7d2c"/><rect x="222.400" y="1029.500" width="40" height="2" fill="#b4551c"/>
<path d="M222.400 1020l20-28h10l-30 39zM262 1003v12l-14 17h-12z" fill="#e5652a" opacity=".7"/>
<circle cx="242.500" cy="1011.500" r="7" fill="#f4f4e0"/>
<path d="M229.500 1005v-6h6M255.500 1005v-6h-6M229.500 1018v6h6M255.500 1018v6h-6" fill="none" stroke="#fbe7d4" stroke-width="1.700"/>
<!-- Orange 2 -->
<rect x="295" y="992" width="40" height="39.500" fill="#ee7d2c"/><rect x="295" y="1029.500" width="40" height="2" fill="#b4551c"/>
<path d="M295 1020l20-28h10l-30 39zM335 1003v12l-14 17h-12z" fill="#e5652a" opacity=".7"/>
<rect x="307" y="1005" width="16" height="13" rx="2" fill="#fbe7d4"/><circle cx="315" cy="1011.500" r="3.500" fill="#ee7d2c"/>
<path d="M302 1005v-6h6M328 1005v-6h-6M302 1018v6h6M328 1018v6h-6" fill="none" stroke="#fbe7d4" stroke-width="1.700"/>
<!-- Whatsapp -->
<path d="M388 994a17 17 0 1 1-8.500 31.800l-8.100 3.200 2.800-8a17 17 0 0 1 13.800-27z" fill="#fff"/>
<circle cx="388" cy="1011" r="14.500" fill="#27c24c"/>
<path d="M381 1003.500l3-.5 2.300 5-1.800 2q2 4 6.500 6.300l2-2 5 2.200-.5 3q-2.500 2-5.500 1.200q-6-1.500-10.500-7q-3.500-4.500-2.500-8.200z" fill="#fff"/>
<!-- Chrome -->
<rect x="427.500" y="989.500" width="63" height="46" fill="#fff" fill-opacity=".18" stroke="#e8e4ea" stroke-width="1.200"/>
<rect x="492.500" y="989.500" width="3" height="46" fill="none" stroke="#e8e4ea" stroke-width="1"/>
<path d="M458 1011.700L442.400 1002.700A18 18 0 0 1 473.600 1002.700Z" fill="#db4437"/>
<path d="M458 1011.700L473.600 1002.700A18 18 0 0 1 458 1029.700Z" fill="#fbc02d"/>
<path d="M458 1011.700L458 1029.700A18 18 0 0 1 442.400 1002.700Z" fill="#2e9e4f"/>
<circle cx="458" cy="1011.700" r="8.500" fill="#f1f1f1"/><circle cx="458" cy="1011.700" r="6.500" fill="#4285f4"/>
<!-- Tray -->
<path d="M1649 1015h10l-5-5z" fill="#f4f0f3"/>
<path d="M1679 1004.500v17.500" stroke="#fff" stroke-width="1.500"/><path d="M1680 1005h8l1 2h7v9h-8l-1-2h-7z" fill="#f6f2f5" stroke="#6e5c68" stroke-width=".6"/>
<circle cx="1691.500" cy="1018" r="5" fill="#e53935" stroke="#fff" stroke-width="1"/><path d="M1689.500 1016l4 4M1693.500 1016l-4 4" stroke="#fff" stroke-width="1.200"/>
<path d="M1708.500 1017h2.500v4h-2.500zM1712 1014h2.500v7H1712zM1715.500 1011h2.500v10h-2.500zM1719 1008h2.500v13H1719z" fill="#f4f0f3" stroke="#4b4048" stroke-width=".5"/>
<path d="M1739 1009h4l6-5v19l-6-5h-4z" fill="#f4f0f3" stroke="#5b4e58" stroke-width=".6"/><path d="M1752.500 1010q2 3.500 0 7" stroke="#f4f0f3" stroke-width="1.200" fill="none"/>
<text x="1774" y="1019" font-size="14.500" fill="#f3ecf1" textLength="28.700" lengthAdjust="spacingAndGlyphs">ENG</text>
<text x="1845" y="1008" font-size="15" fill="#f3ecf1" textLength="34" lengthAdjust="spacingAndGlyphs">11:13</text>
<text x="1823" y="1030" font-size="15" fill="#f3ecf1" textLength="76" lengthAdjust="spacingAndGlyphs">09-10-2020</text>
</svg>
</body></html>
